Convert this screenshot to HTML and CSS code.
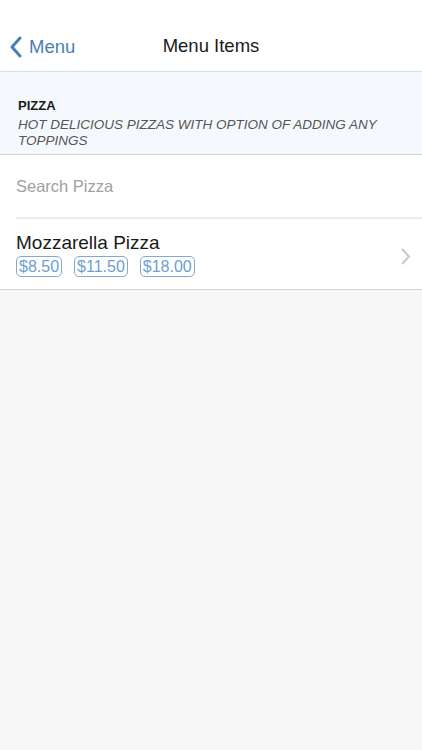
FILE: index.html
```html
<!DOCTYPE html>
<html lang="en">
<head>
  <meta charset="UTF-8">
  <title>Menu Items</title>
  <link rel="stylesheet" href="styles.css">
</head>
<body>
  <header class="navbar">
    <a class="back" href="#">
      <svg class="back-icon" width="14" height="22" viewBox="0 0 14 22">
        <path d="M11 2 L3 11 L11 20" fill="none" stroke="#4a7fb5" stroke-width="3" stroke-linecap="round" stroke-linejoin="round"/>
      </svg>
      <span>Menu</span>
    </a>
    <h1>Menu Items</h1>
    <div></div>
  </header>

  <section class="category">
    <h2>PIZZA</h2>
    <p>HOT DELICIOUS PIZZAS WITH OPTION OF ADDING ANY TOPPINGS</p>
  </section>

  <div class="list">
    <div class="search">
      <input type="text" placeholder="Search Pizza">
    </div>

    <div class="item">
      <div class="item-text">
        <div class="item-name">Mozzarella Pizza</div>
        <div class="prices">
          <span class="price">$8.50</span>
          <span class="price">$11.50</span>
          <span class="price">$18.00</span>
        </div>
      </div>
      <svg class="chevron" width="12" height="19" viewBox="0 0 12 19">
        <path d="M2 2 L9 9.5 L2 17" fill="none" stroke="#c7c7cc" stroke-width="2"/>
      </svg>
    </div>
  </div>
</body>
</html>
```

FILE: styles.css
```css
body {
  margin: 0;
  font-family: "Liberation Sans", Arial, sans-serif;
  background: #f7f7f7;
  color: #1a1a1a;
}

.navbar {
  height: 51px;
  padding-top: 20px;
  background: white;
  border-bottom: 1px solid #dedede;
  display: grid;
  grid-template-columns: 1fr auto 1fr;
  align-items: center;
}

.navbar h1 {
  margin: 0;
  font-size: 18.5px;
  font-weight: normal;
  color: #1a1a1a;
}

.back {
  justify-self: start;
  margin-left: 9px;
  margin-top: 2px;
  display: flex;
  align-items: center;
  gap: 6px;
  color: #4a7fb5;
  text-decoration: none;
  font-size: 18.5px;
}

.back-icon {
  display: block;
}

.category {
  background: #f5f9fd;
  border-bottom: 1px solid #d6d6d6;
  padding: 26px 16px 5px 18px;
}

.category h2 {
  margin: 0;
  font-size: 13px;
  line-height: 16px;
  font-weight: bold;
  color: #1a1a1a;
}

.category p {
  margin: 3px 0 0;
  font-size: 13.5px;
  line-height: 16px;
  font-style: italic;
  color: #555;
}

.list {
  background: white;
  border-bottom: 1px solid #d6d6d6;
  padding-left: 16px;
}

.search {
  height: 62px;
  display: flex;
  align-items: center;
  border-bottom: 2px solid #ededed;
}

.search input {
  border: none;
  outline: none;
  padding: 0;
  font-family: inherit;
  font-size: 16.5px;
  width: 100%;
  background: transparent;
}

.search input::placeholder {
  color: #a0a0a0;
}

.item {
  display: flex;
  align-items: center;
  padding: 13px 10px 12px 0;
}

.item-text {
  flex: 1;
}

.item-name {
  font-size: 19px;
  line-height: 22px;
  color: #1a1a1a;
}

.prices {
  display: flex;
  gap: 12px;
  margin-top: 2px;
}

.price {
  border: 1px solid #7fa8d6;
  border-radius: 5px;
  padding: 0 2px;
  font-size: 16px;
  line-height: 19px;
  color: #6d9dd3;
}

.chevron {
  margin-top: 4px;
}
```
